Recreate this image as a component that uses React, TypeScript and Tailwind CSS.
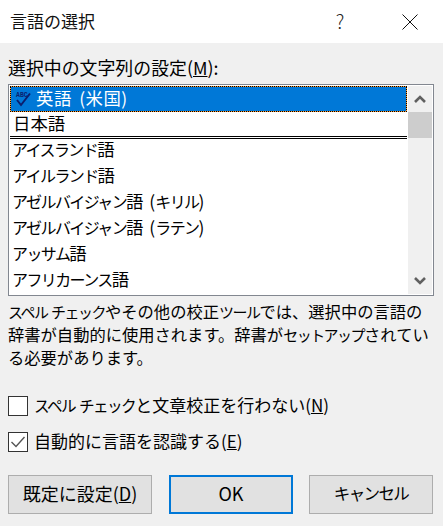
import type { ReactNode } from 'react';

const languages = [
  'アイスランド語',
  'アイルランド語',
  'アゼルバイジャン語 (キリル)',
  'アゼルバイジャン語 (ラテン)',
  'アッサム語',
  'アフリカーンス語',
];

const font = "font-['Noto_Sans_CJK_JP','Noto_Sans',sans-serif]";

// katakana is much narrower than kanji in the original UI font
function Jp({ text }: { text: string }) {
  const parts = text.split(/([\u30A0-\u30FF]+)/);
  return (
    <>
      {parts.map((part, i) =>
        i % 2 === 1 ? (
          <span key={i} className="text-[0.92em] tracking-[-0.1em]">
            {part}
          </span>
        ) : (
          <span key={i}>{part}</span>
        ),
      )}
    </>
  );
}

function Button({ children, className }: { children: ReactNode; className: string }) {
  return (
    <div className={`h-[39px] flex items-center justify-center bg-[#e1e1e1] text-[18px] text-black pb-[2px] ${className}`}>
      {children}
    </div>
  );
}

export default function App() {
  return (
    <div className={`${font} w-[443px] h-[526px] bg-[#f0f0f0] text-black overflow-hidden`}>
      <div className="h-[43px] bg-white flex items-center">
        <span className="ml-[10px] text-[17px] flex-1 text-[#111] pb-[1px]">言語の選択</span>
        <span className="w-[20px] text-center text-[19px] mr-[52px] font-light text-[#222] pb-[1px]">?</span>
        <svg width="16" height="16" viewBox="0 0 16 16" className="mr-[25px]">
          <path d="M0.5 0.5 L15.5 15.5 M15.5 0.5 L0.5 15.5" fill="none" stroke="#111" strokeWidth="1" />
        </svg>
      </div>

      <div className="px-[8px]">
        <div className="h-[41px] flex items-end pb-[6px] text-[17.9px] leading-[22px]">
          <span>
            選択中の文字列の設定(<span className="underline">M</span>):
          </span>
        </div>

        <div className="h-[212px] w-[426px] border border-[#828790] bg-white flex p-px">
          <div className="w-[397px]">
            <div className="h-[26px] bg-[#ff9a2e]">
              <div className="h-full bg-[#0078d7] bg-clip-padding border border-dotted border-black flex items-center text-white text-[17.4px] leading-none">
                <svg width="18" height="18" viewBox="0 0 18 18" className="ml-[4px] shrink-0">
                  <text x="1" y="7" fontSize="6.5" fontWeight="700" fill="#0b1f6e" fontFamily="Liberation Mono, monospace">ABC</text>
                  <path d="M2 10 L6 15 L15 3.5" fill="none" stroke="#0b1f6e" strokeWidth="2" />
                </svg>
                <span className="ml-[3px] pb-[2px] tracking-[0.5px] [word-spacing:3px]">英語 (米国)</span>
              </div>
            </div>
            <div className="h-[24px] flex items-center pl-[3px] text-[17.4px] leading-none pb-[2px]">日本語</div>
            <div className="h-[3px] border-y border-black" />
            {languages.map((name) => (
              <div key={name} className="h-[26px] flex items-center pl-[2px] text-[17.4px] leading-none pb-[6px] whitespace-pre [word-spacing:2px]">
                <Jp text={name} />
              </div>
            ))}
          </div>
          <div className="w-[24px] bg-[#f0f0f0] flex flex-col ml-px">
            <div className="h-[26px] flex items-center justify-center">
              <svg width="12" height="8" viewBox="0 0 12 8">
                <path d="M1 7 L6 2 L11 7" fill="none" stroke="#606060" strokeWidth="2.6" />
              </svg>
            </div>
            <div className="h-[26px] bg-[#cdcdcd]" />
            <div className="flex-1" />
            <div className="h-[26px] flex items-center justify-center">
              <svg width="12" height="8" viewBox="0 0 12 8">
                <path d="M1 1 L6 6 L11 1" fill="none" stroke="#606060" strokeWidth="2.6" />
              </svg>
            </div>
          </div>
        </div>

        <div className="mt-[4px] text-[16.3px] leading-[23px] whitespace-nowrap">
          <div><Jp text="スペル チェックやその他の校正ツールでは、選択中の言語の" /></div>
          <div><Jp text="辞書が自動的に使用されます。辞書がセットアップされてい" /></div>
          <div><Jp text="る必要があります。" /></div>
        </div>

        <div className="mt-[27px] flex items-center h-[20px]">
          <div className="w-[20px] h-[20px] border border-[#333] bg-white" />
          <span className="ml-[6px] text-[17px] pb-[2px] whitespace-nowrap">
            <Jp text="スペル チェックと文章校正を行わない" />(<span className="underline">N</span>)
          </span>
        </div>
        <div className="mt-[16px] flex items-center h-[20px]">
          <div className="w-[20px] h-[20px] border border-[#333] bg-white flex items-center justify-center">
            <svg width="16" height="16" viewBox="0 0 16 16">
              <path d="M1.5 8 L6 12.5 L14.5 3" fill="none" stroke="#555" strokeWidth="1.4" />
            </svg>
          </div>
          <span className="ml-[6px] text-[17px] pb-[2px] whitespace-nowrap">
            自動的に言語を認識する(<span className="underline">E</span>)
          </span>
        </div>

        <div className="mt-[23px] flex w-[426px]">
          <Button className="w-[144px] border border-[#adadad]">
            <span>
              既定に設定(<span className="underline">D</span>)
            </span>
          </Button>
          <Button className="w-[124px] ml-[17px] border-[2px] border-[#0078d7]">OK</Button>
          <Button className="w-[124px] ml-[16px] border border-[#adadad]">
            <Jp text="キャンセル" />
          </Button>
        </div>
      </div>
    </div>
  );
}
